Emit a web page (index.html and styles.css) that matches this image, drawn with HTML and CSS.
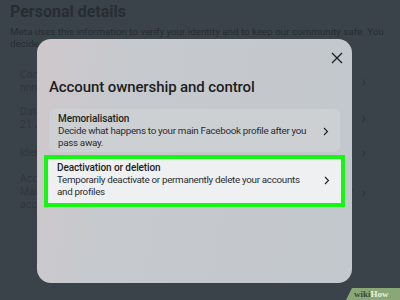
FILE: index.html
```html
<!DOCTYPE html>
<html>
<head>
<meta charset="utf-8">
<link rel="stylesheet" href="styles.css">
</head>
<body>
<div class="page">
  <h1 class="pd-title">Personal details</h1>
  <p class="pd-sub">Meta uses this information to verify your identity and to keep our community safe. You decide what personal details you make visible to others.</p>
  <div class="rows">
    <div class="row r1"><div class="row-text"><div class="rt">Contact info</div><div class="rs">nnnnnnnnnnnnn</div></div><span class="rch">›</span></div>
    <div class="row r2"><div class="row-text"><div class="rt">Date of birth</div><div class="rs">21 January</div></div><span class="rch">›</span></div>
    <div class="row r3"><div class="row-text"><div class="rt">Identity confirmation</div></div><span class="rch">›</span></div>
    <div class="row r4"><div class="row-text"><div class="rt">Account ownership and control</div><div class="rs">Manage your data, modify your legacy contact, deactivate or delete your</div><div class="rs">accounts and profiles.</div></div><span class="rch">›</span></div>
  </div>
</div>
<div class="modal">
  <div class="modal-top">
    <svg class="close" width="12" height="12" viewBox="0 0 12 12"><path d="M1 1L11 11M11 1L1 11" stroke="#1c1e21" stroke-width="1.3" fill="none"/></svg>
  </div>
  <h2 class="m-title">Account ownership and control</h2>
  <div class="items">
    <div class="item item-a">
      <div class="it-text">
        <div class="it-title">Memorialisation</div>
        <div class="it-desc">Decide what happens to your main Facebook profile after you pass away.</div>
      </div>
      <svg class="chev" width="6" height="9" viewBox="0 0 6 9"><path d="M1 1L4.5 4.5L1 8" stroke="#1c1e21" stroke-width="1.1" fill="none"/></svg>
    </div>
    <div class="hl">
      <div class="item item-b">
        <div class="it-text">
          <div class="it-title">Deactivation or deletion</div>
          <div class="it-desc">Temporarily deactivate or permanently delete your accounts and profiles</div>
        </div>
        <svg class="chev" width="6" height="9" viewBox="0 0 6 9"><path d="M1 1L4.5 4.5L1 8" stroke="#1c1e21" stroke-width="1.1" fill="none"/></svg>
      </div>
    </div>
  </div>
</div>
<div class="wh"><span class="wh-a">wiki</span><span class="wh-b">How</span></div>
</body>
</html>
```
FILE: styles.css
```css
html, body { margin: 0; padding: 0; }
body {
  width: 400px; height: 300px; overflow: hidden;
  background: #3b434a;
  font-family: Roboto, "Noto Sans", sans-serif;
  position: relative;
}
.page { padding: 2px 10px 0 10px; color: #283036; }
.pd-title { margin: 0; font-size: 16px; font-weight: 700; line-height: 20px; color: #262d33; }
.pd-sub { margin: 4px 0 0; font-size: 9.8px; line-height: 12px; color: #262d33; width: 380px; }
.rows { margin-top: 18px; display: flex; flex-direction: column; padding-left: 10px; }
.row { display: flex; align-items: center; justify-content: space-between; padding-right: 24px; }
.r2 { margin-top: 11px; }
.r3 { margin-top: 12px; }
.r4 { margin-top: 11px; }
.rt { font-size: 10.5px; line-height: 13px; color: #30373d; }
.rs { font-size: 10.5px; line-height: 13px; color: #30373d; }
.rch { color: #2c3339; font-size: 15px; }
.modal {
  position: absolute; left: 37px; top: 39px; width: 315px; height: 244px;
  border-radius: 14px;
  background: linear-gradient(100deg, #cfc8cb 0%, #c6c9cd 25%, #c3c8cc 100%);
  box-sizing: border-box; padding: 0 12px;
}
.modal-top { display: flex; justify-content: flex-end; height: 25px; align-items: flex-end; margin-right: -3px; }
.close { display: block; }
.m-title { margin: 13px 0 0; font-size: 15px; font-weight: 500; color: #1c1e21; line-height: 20px; letter-spacing: -0.1px; }
.items { margin-top: 12px; display: flex; flex-direction: column; gap: 3px; }
.item { display: flex; align-items: center; padding: 4px 11px 3px 9px; border-radius: 6px; }
.item-a { background: #ccd0d3; }
.hl { margin: 0 -5px; border: 4px solid #17f514; background: #17f514; }
.item-b { background: #eff0f1; border-radius: 0; padding: 3px 11px 5px 9px; }
.it-text { flex: 1; }
.it-title { font-size: 10px; font-weight: 500; color: #1c1e21; line-height: 12px; letter-spacing: -0.1px; }
.it-desc { font-size: 9.8px; color: #2a2d31; line-height: 12px; width: 254px; letter-spacing: -0.3px; }
.chev { margin-left: 6px; }
.wh {
  position: absolute; right: 0; bottom: 0; width: 46px; height: 12px;
  background: #8aa877; clip-path: polygon(6px 0, 100% 0, 100% 100%, 0 100%);
  font-family: "Liberation Serif", serif; font-size: 9px; line-height: 12px; padding-left: 8px; font-weight: 700;
}
.wh-a { color: #3a4a2e; }
.wh-b { color: #e9eee4; }
```
